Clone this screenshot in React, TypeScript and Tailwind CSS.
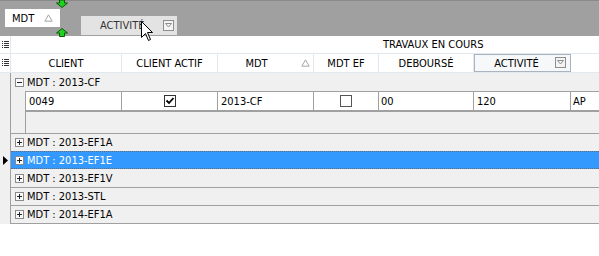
import React from 'react';

const font = { fontFamily: '"DejaVu Sans Condensed", Tahoma, "Liberation Sans", sans-serif' };

const SortUp: React.FC = () => (
  <svg width="9" height="8" viewBox="0 0 9 8">
    <path d="M4.5 0.8 L8.2 7.2 L0.8 7.2 Z" fill="none" stroke="#a6a6a6" strokeWidth="1" />
  </svg>
);

const FilterIcon: React.FC = () => (
  <svg width="11" height="11" viewBox="0 0 11 11">
    <rect x="0.5" y="0.5" width="10" height="10" fill="#f4f4f4" stroke="#8e8e8e" />
    <path d="M2.5 3.5 L8.5 3.5 L5.5 7 Z" fill="none" stroke="#8e8e8e" />
  </svg>
);

const ListIcon: React.FC = () => (
  <svg width="7" height="8" viewBox="0 0 7 8">
    {[0, 2, 4, 6].map((y) => (
      <g key={y} fill="#333">
        <rect x="0" y={y} width="1" height="1" />
        <rect x="2" y={y} width="5" height="1" />
      </g>
    ))}
  </svg>
);

const ExpandBox: React.FC<{ open?: boolean }> = ({ open }) => (
  <svg width="9" height="9" viewBox="0 0 9 9">
    <rect x="0.5" y="0.5" width="8" height="8" fill="#fafafa" stroke="#8a8a8a" />
    <rect x="2" y="4" width="5" height="1" fill="#222" />
    {!open && <rect x="4" y="2" width="1" height="5" fill="#222" />}
  </svg>
);

const Check: React.FC<{ checked?: boolean }> = ({ checked }) => (
  <svg width="12" height="12" viewBox="0 0 12 12">
    <rect x="0.5" y="0.5" width="11" height="11" fill="#fff" stroke={checked ? '#333' : '#555'} />
    {checked && <path d="M2.5 5.5 L5 8 L9.5 3" fill="none" stroke="#000" strokeWidth="1.8" />}
  </svg>
);

const cols = [
  { label: 'CLIENT', w: 'w-[111px]' },
  { label: 'CLIENT ACTIF', w: 'w-[96px]' },
  { label: 'MDT', w: 'w-[96px]', sort: true },
  { label: 'MDT EF', w: 'w-[65px]' },
  { label: 'DEBOURSÉ', w: 'w-[95px]' },
  { label: 'ACTIVITÉ', w: 'w-[97px]', filter: true },
];

const groups = ['MDT : 2013-EF1A', 'MDT : 2013-EF1E', 'MDT : 2013-EF1V', 'MDT : 2013-STL', 'MDT : 2014-EF1A'];

export default function App() {
  return (
    <div className="relative w-[599px] h-[256px] bg-white overflow-hidden text-[11px] text-black leading-none" style={font}>
      {/* group by panel */}
      <div className="h-[36px] bg-[#a0a0a0] border-t border-[#8a8a8a] flex items-start pl-[5px]">
        <div className="mt-[8px] w-[55px] h-[18px] bg-white flex items-center justify-between pl-[7px] pr-[7px]">
          <span>MDT</span>
          <SortUp />
        </div>
        <div className="ml-[21px] mt-[15px] w-[96px] h-[19px] bg-[#e3e3e3] flex items-center pl-[19px] pr-[3px] text-[#333]">
          <span className="flex-1">ACTIVITÉ</span>
          <FilterIcon />
        </div>
      </div>

      {/* band row */}
      <div className="flex h-[18px] border-b border-[#e1e8f0]">
        <div className="w-[11px] border-r border-[#e1e8f0] flex items-center justify-center">
          <ListIcon />
        </div>
        <div className="flex-1 flex items-center pl-[372px]">TRAVAUX EN COURS</div>
      </div>

      {/* column headers */}
      <div className="flex h-[19px] border-b border-[#e1e8f0]">
        <div className="w-[11px] border-r border-[#e1e8f0] flex items-center justify-center">
          <ListIcon />
        </div>
        {cols.map((c) => (
          <div
            key={c.label}
            className={`${c.w} relative flex items-center justify-center ${
              c.filter ? 'border border-[#aab4c0] bg-[#f6f8fa] pr-[12px]' : 'border-r border-[#e1e8f0]'
            } ${c.sort ? 'pr-[18px]' : ''}`}
          >
            <span>{c.label}</span>
            {c.sort && (
              <span className="absolute right-[3px] top-[5px]">
                <SortUp />
              </span>
            )}
            {c.filter && (
              <span className="absolute right-[4px] top-[2px]">
                <FilterIcon />
              </span>
            )}
          </div>
        ))}
      </div>

      {/* grid body */}
      <div className="flex">
        <div className="w-[11px] bg-[#f0f0f0] border-r border-[#a0a0a0] flex flex-col">
          <div className="h-[78px]" />
          <div className="h-[18px] flex items-center pl-[3px]">
            <svg width="5" height="9" viewBox="0 0 5 9">
              <path d="M0 0 L5 4.5 L0 9 Z" fill="#000" />
            </svg>
          </div>
          <div className="h-[54px]" />
        </div>

        <div className="flex-1 bg-[#f0f0f0] flex flex-col">
          {/* expanded group */}
          <div className="h-[18px] flex items-center pl-[4px] gap-[3px]">
            <ExpandBox open />
            <span>MDT : 2013-CF</span>
          </div>
          <div className="flex">
            <div className="w-[14px]" />
            <div className="flex-1 border-l border-[#a0a0a0] flex flex-col">
              <div className="flex h-[21px] bg-white border-t border-b-2 border-[#a0a0a0]">
                <div className="w-[96px] border-r border-[#a0a0a0] flex items-center pl-[3px]">0049</div>
                <div className="w-[96px] border-r border-[#a0a0a0] flex items-center justify-center">
                  <Check checked />
                </div>
                <div className="w-[96px] border-r border-[#a0a0a0] flex items-center pl-[3px]">2013-CF</div>
                <div className="w-[65px] border-r border-[#a0a0a0] flex items-center justify-center">
                  <Check />
                </div>
                <div className="w-[95px] border-r border-[#a0a0a0] flex items-center pl-[2px]">00</div>
                <div className="w-[97px] border-r border-[#a0a0a0] flex items-center pl-[3px]">120</div>
                <div className="flex-1 flex items-center pl-[2px]">AP</div>
              </div>
              <div className="h-[21px]" />
            </div>
          </div>

          {/* collapsed groups */}
          {groups.map((g, i) => {
            const sel = i === 1;
            return (
              <div
                key={g}
                className={`h-[18px] flex items-center pl-[4px] gap-[3px] border-t ${
                  sel
                    ? 'bg-[#3399ff] text-white border-dotted border-[#6b6b6b] border-b'
                    : i === 2
                    ? 'border-transparent'
                    : 'border-[#a0a0a0]'
                }`}
              >
                <ExpandBox />
                <span>{g}</span>
              </div>
            );
          })}
          <div className="border-t border-[#a0a0a0]" />
        </div>
      </div>

      {/* drag drop indicator arrows */}
      <svg className="absolute left-[56px] top-0" width="12" height="8" viewBox="0 0 12 8">
        <path d="M3.5 0 L8.5 0 L8.5 3 L11.5 3 L6 7.5 L0.5 3 L3.5 3 Z" fill="#1ed21e" stroke="#0a5a0a" strokeWidth="1" />
      </svg>
      <svg className="absolute left-[56px] top-[28px]" width="12" height="9" viewBox="0 0 12 9">
        <path d="M6 0.5 L11.5 5 L8.5 5 L8.5 8.5 L3.5 8.5 L3.5 5 L0.5 5 Z" fill="#1ed21e" stroke="#0a5a0a" strokeWidth="1" />
      </svg>

      {/* mouse cursor */}
      <svg className="absolute left-[141px] top-[21px]" width="13" height="21" viewBox="0 0 13 21">
        <path
          d="M0.5 0.5 L0.5 16.5 L4.5 12.5 L7.5 19.5 L9.5 18.5 L6.5 11.5 L11.5 11.5 Z"
          fill="#fff"
          stroke="#000"
          strokeWidth="1"
        />
      </svg>
    </div>
  );
}
